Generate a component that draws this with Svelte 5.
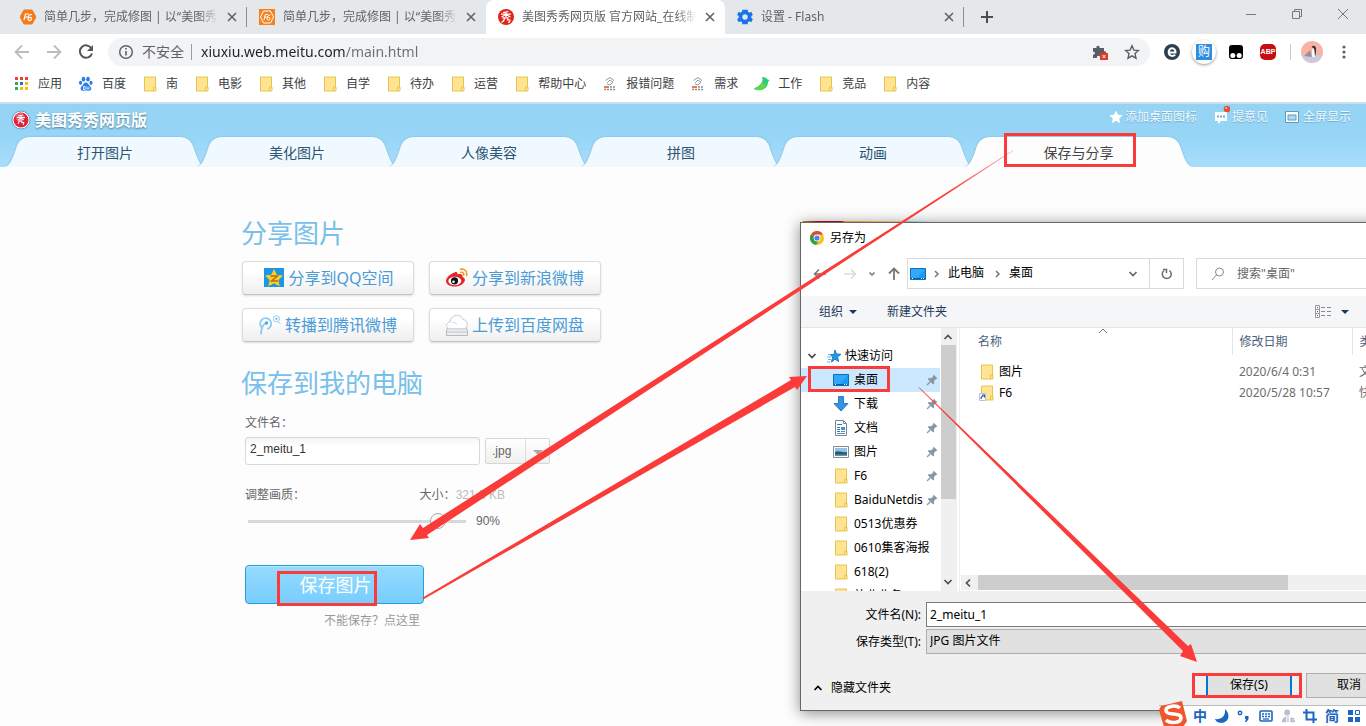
<script lang="ts">
  const browserTabs = [
    { title: '简单几步，完成修图 | 以“美图秀秀”为例', icon: 'f6', active: false },
    { title: '简单几步，完成修图 | 以“美图秀秀”为例', icon: 'f6square', active: false },
    { title: '美图秀秀网页版 官方网站_在线制作', icon: 'meitu', active: true },
    { title: '设置 - Flash', icon: 'gear', active: false },
  ];

  const bookmarks = [
    { label: '应用', icon: 'apps' },
    { label: '百度', icon: 'paw' },
    { label: '南', icon: 'folder' },
    { label: '电影', icon: 'folder' },
    { label: '其他', icon: 'folder' },
    { label: '自学', icon: 'folder' },
    { label: '待办', icon: 'folder' },
    { label: '运营', icon: 'folder' },
    { label: '帮助中心', icon: 'folder' },
    { label: '报错问题', icon: 'seal' },
    { label: '需求', icon: 'seal' },
    { label: '工作', icon: 'bird' },
    { label: '竞品', icon: 'folder' },
    { label: '内容', icon: 'folder' },
  ];

  const navTabs = [
    { label: '打开图片', width: 192 },
    { label: '美化图片', width: 192 },
    { label: '人像美容', width: 192 },
    { label: '拼图', width: 192 },
    { label: '动画', width: 192 },
    { label: '保存与分享', width: 219 },
  ];
  let activeTab = $state('保存与分享');

  const shares = [
    { label: '分享到QQ空间', icon: 'qzone' },
    { label: '分享到新浪微博', icon: 'weibo' },
    { label: '转播到腾讯微博', icon: 'tencent' },
    { label: '上传到百度网盘', icon: 'cloud' },
  ];

  const places = [
    { label: '桌面', icon: 'desktop', pinned: true },
    { label: '下载', icon: 'download', pinned: true },
    { label: '文档', icon: 'document', pinned: true },
    { label: '图片', icon: 'picture', pinned: true },
    { label: 'F6', icon: 'folder', pinned: true },
    { label: 'BaiduNetdis', icon: 'folder', pinned: true },
    { label: '0513优惠券', icon: 'folder', pinned: false },
    { label: '0610集客海报', icon: 'folder', pinned: false },
    { label: '618(2)', icon: 'folder', pinned: false },
    { label: '补业业务', icon: 'folder', pinned: false },
  ];

  const files = [
    { name: '图片', date: '2020/6/4 0:31', type: '文件夹', icon: 'folder' },
    { name: 'F6', date: '2020/5/28 10:57', type: '快捷方式', icon: 'shortcut' },
  ];

  let url = $state('xiuxiu.web.meitu.com/main.html');
  let fileName = $state('2_meitu_1');
  let quality = $state(90);

  // outline of a header tab, flaring out at the foot on both sides
  function tabShape(w: number) {
    return `M0 30 C6 28 8 20 11 12 C13 4 18 0 25 0 H${w - 25} C${w - 18} 0 ${w - 13} 4 ${w - 11} 12 C${w - 8} 20 ${w - 6} 28 ${w} 30 Z`;
  }
</script>

{#snippet icon(name: string)}
  {#if name === 'f6'}
    <svg width="16" height="16" viewBox="0 0 16 16"><path d="M4 1h8l4 7-4 7H4L0 8z" fill="#f47a1a" stroke="#f47a1a" stroke-linejoin="round" /><path d="M4 11l1.500-6H9M5 8h2.500M12 5.500c-3 0-4 2-4 4 0 3 3.500 2.500 3.500 0 0-1.500-2-1.700-3-.4" fill="none" stroke="#fff" stroke-width="1.200" /></svg>
  {:else if name === 'f6square'}
    <svg width="16" height="16" viewBox="0 0 16 16"><path d="M0 0h16v16H0z" fill="#f58220" /><path d="M4.500 2h7l3 6-3 6h-7l-3-6z" fill="none" stroke="#fff" /><path d="M5 11l1.300-5.500H9M5.700 8h2M11.500 6c-2.500 0-3.500 1.500-3.500 3.500 0 2.500 3 2 3 0 0-1.200-1.700-1.500-2.600-.4" fill="none" stroke="#fff" /></svg>
  {:else if name === 'meitu'}
    <svg width="16" height="16" viewBox="0 0 16 16"><circle cx="8" cy="8" r="8" fill="#e32418" /><path d="M5 3.500l5.500-1M3 5.200h10M8 3v5M8 5.500L3.500 8M8 5.500L12.500 8M4.500 8.800H10L9.500 11H12c0 2-.5 2.500-2 2.500M6.500 9c0 2.500-1 3.500-3 4.500" fill="none" stroke="#fff" stroke-width="1.200" /></svg>
  {:else if name === 'gear'}
    <svg width="16" height="16" viewBox="0 0 24 24"><path fill="#1a73e8" fill-rule="evenodd" d="M21.400 13.300c.1-.4.1-.8.100-1.300s0-.9-.1-1.300l2.400-1.900-2.400-4.500-3 1.200c-.6-.5-1.300-.9-2-1.200L16 1H8l-.5 3.300c-.7.3-1.400.7-2 1.200l-3-1.200L.2 8.800l2.400 1.900c-.1.400-.1.900-.1 1.300s0 .9.100 1.300L.2 15.200l2.300 4.500 3-1.200c.6.500 1.300.9 2 1.200L8 23h8l.4-3.300c.7-.3 1.400-.7 2-1.200l3 1.200 2.400-4.500zM12 16a4 4 0 1 1 0-8 4 4 0 0 1 0 8z" /></svg>
  {:else if name === 'apps'}
    <svg width="16" height="16" viewBox="0 0 16 16"><path d="M1 1h3v3H1zM6 1h3v3H6zM11 1h3v3h-3z" fill="#ea4335" /><path d="M1 6h3v3H1zM1 11h3v3H1z" fill="#34a853" /><path d="M6 6h3v3H6z" fill="#1a73e8" /><path d="M11 6h3v3h-3zM6 11h3v3H6zM11 11h3v3h-3z" fill="#fbbc05" /></svg>
  {:else if name === 'paw'}
    <svg width="16" height="16" viewBox="0 0 16 16" fill="#2b7de9"><ellipse cx="5.500" cy="3.200" rx="1.800" ry="2.400" /><ellipse cx="10" cy="3.200" rx="1.800" ry="2.400" /><ellipse cx="2.500" cy="6.800" rx="1.600" ry="2.100" /><ellipse cx="13" cy="6.800" rx="1.600" ry="2.100" /><path d="M7.800 6.500c2.200 0 2.500 2 4.200 3.500 2.500 2.500 1 5-1.500 4.700-1.800-.2-3.500-.2-5 0C2.500 15 1.500 12 4 10c1.500-1.300 1.800-3.500 3.800-3.500z" /><path d="M5.500 10.500h1.700v3H5.500zM9 10.500v2.500h2v-2.500" fill="none" stroke="#fff" stroke-width=".8" /></svg>
  {:else if name === 'folder' || name === 'shortcut'}
    <svg width="16" height="16" viewBox="0 0 16 16"><path d="M2.500 1h11v10h.5v4H2.500z" fill="#ffe491" stroke="#e9c34f" /><path d="M11.500 15v-4h2.500" fill="none" stroke="#e9c34f" />
      {#if name === 'shortcut'}<path d="M.5 8.500h6v7h-6z" fill="#fff" stroke="#b8c4d2" /><path d="M2 14c0-2 1-3 2.500-3M3 10h2.500v2.500" fill="none" stroke="#245aa8" stroke-width="1.200" />{/if}
    </svg>
  {:else if name === 'seal'}
    <svg width="16" height="16" viewBox="0 0 16 16"><path d="M3.500 4.500L8 1.500l4 3M5 7l3-3 3 2-3 3-3-1" fill="none" stroke="#9a9a9a" /><path d="M2 11h5" stroke="#f47a3a" stroke-width="2" /><path d="M8 11h6M2 13.500h12" stroke="#8d8d8d" stroke-width="1.500" stroke-dasharray="2 1" /></svg>
  {:else if name === 'bird'}
    <svg width="16" height="16" viewBox="0 0 16 16"><path d="M8 1c3 0 5 1 5.500 2.500l2 .5-1.500 2c0 5-4 8-8 8-3 0-5-.5-6-1.500C6 10 10 6 8 1z" fill="#2fcb78" /><path d="M0 13c4-1.500 6-4 8-6.500 2.500 1 4 3 3.500 5C8.500 15 3 15 0 13z" fill="#5fd64a" /></svg>
  {:else if name === 'qzone'}
    <svg width="22" height="20" viewBox="0 0 22 20"><path d="M1 0h20v19H1z" fill="#1c97e8" /><path d="M11 1l2.800 5.800 6.200.8-4.600 4.300 1.200 6.300L11 15.200l-5.600 3 1.200-6.300L2 7.600l6.200-.8z" fill="#fcd21c" /><path d="M7.500 8h7l-6 5h6.500" fill="none" stroke="#c06a10" stroke-width="1.500" /></svg>
  {:else if name === 'weibo'}
    <svg width="22" height="20" viewBox="0 0 22 20"><path d="M8.500 4.500c2-1 3.500 0 3 2 3.500-1 5.500 0 5 2.500 2 .7 3 2.500 2 4.500-1.500 3-5.500 5-10 5C3.500 18.500 0 16 0 13c0-3.500 5-7.500 8.500-8.500z" fill="#e6232a" /><ellipse cx="8.800" cy="13" rx="6.500" ry="4.200" fill="#fff" /><circle cx="8.500" cy="12.800" r="3.600" fill="#111" /><circle cx="7.500" cy="13.800" r="1.300" fill="#fff" /><path d="M14.500 1.300c4-1 7 2.200 6 6.200M14.800 4.300c2-.3 3.300 1 2.800 2.800" fill="none" stroke="#f59a23" stroke-width="1.600" stroke-linecap="round" /></svg>
  {:else if name === 'tencent'}
    <svg width="22" height="20" viewBox="0 0 22 20" fill="none" stroke="#8cccf2"><path d="M2 19.500C2 13 4 9 7.500 8M4 13.500a5.500 5.500 0 1 1 4 .5" stroke-width="1.800" /><circle cx="7.500" cy="8" r="1.700" fill="#43a9e6" stroke="none" /><circle cx="17.500" cy="3.800" r="3" /><circle cx="17.500" cy="3.800" r="1" fill="#43a9e6" stroke="none" /><path d="M18 6c1 1 2 2 3.500 2.500" /></svg>
  {:else if name === 'cloud'}
    <svg width="22" height="21" viewBox="0 0 22 21"><path d="M1.500 13h19l1 3v4.500H.5V16z" fill="#eceeef" stroke="#b8b8b8" /><path d="M1 17h20" stroke="#c2c2c2" /><path d="M3.500 14c-4-1-4-6 .5-7C5-1.500 15-1.500 17 4.500 22 5 22.500 12 19 14z" fill="#fff" stroke="#c4c9ce" /><path d="M6 7.500c2-.5 4 .5 5 2.500M2.500 13.500h17" fill="none" stroke="#ccdce8" /></svg>
  {:else if name === 'desktop'}
    <svg width="16" height="16" viewBox="0 0 16 16"><path d="M.5 2.500h15v11H.5z" fill="#1e9bf5" stroke="#0b70b8" /><path d="M1 3h14l-8 9H1z" fill="#31a8fa" /><path d="M1 12.500h14" stroke="#0b5c9c" /><path d="M2 12.500h1M11 12.500h1M13 12.500h1" stroke="#fff" /></svg>
  {:else if name === 'download'}
    <svg width="16" height="16" viewBox="0 0 16 16"><path d="M5.500.5h5v7h4.500L8 15 1 7.500h4.500z" fill="#3691e0" stroke="#2c7cc8" /></svg>
  {:else if name === 'document'}
    <svg width="16" height="16" viewBox="0 0 16 16"><path d="M2.500.5h8l3 3v12h-11z" fill="#fff" stroke="#7b868e" /><path d="M10.500.5v3h3" fill="none" stroke="#7b868e" /><path d="M4 4.500h5M4 7.500h3M4 9.500h3M4 11.500h3" stroke="#2d7dbd" /><path d="M8 7h4v3H8zM8 11h4v1H8zM4 13h8v1H4z" fill="#4d91c5" /></svg>
  {:else if name === 'picture'}
    <svg width="16" height="16" viewBox="0 0 16 16"><path d="M.5 2.500h15v11H.5z" fill="#fff" stroke="#858f96" /><path d="M2 4h12v8H2z" fill="#8fc4ea" /><path d="M2 8c4-2 7 1 12 0v4H2z" fill="#2e5866" /><path d="M2 10.500h12V12H2z" fill="#5a96b8" /></svg>
  {/if}
{/snippet}

{#snippet chevron(direction: string)}
  <svg class="chevron {direction}" width="10" height="10" viewBox="0 0 10 10"><path d="M1.500 3L5 6.500 8.500 3" fill="none" stroke="currentColor" stroke-width="1.700" /></svg>
{/snippet}

<div class="screen">
  <div class="tab-strip">
    {#each browserTabs as tab}
      <div class="browser-tab" class:active={tab.active}>
        {@render icon(tab.icon)}
        <span class="tab-title">{tab.title}</span>
        <button class="plain" aria-label="关闭">
          <svg width="10" height="10" viewBox="0 0 10 10"><path d="M1 1l8 8M9 1L1 9" stroke="#5f6368" stroke-width="1.600" /></svg>
        </button>
      </div>
    {/each}
    <button class="plain new-tab" aria-label="新标签页">
      <svg width="12" height="12" viewBox="0 0 12 12"><path d="M6 0v12M0 6h12" stroke="#494c50" stroke-width="2" /></svg>
    </button>
    <div class="window-controls">
      <button class="plain" aria-label="最小化"><svg width="10" height="10" viewBox="0 0 10 10"><path d="M0 5.500h10" stroke="#777" /></svg></button>
      <button class="plain" aria-label="还原"><svg width="10" height="10" viewBox="0 0 10 10"><path d="M.5 2.500h7v7h-7zM2.500 2.500v-2h7v7h-2" fill="none" stroke="#777" /></svg></button>
      <button class="plain" aria-label="关闭窗口"><svg width="10" height="10" viewBox="0 0 10 10"><path d="M0 0l10 10M10 0L0 10" stroke="#777" /></svg></button>
    </div>
  </div>

  <div class="toolbar">
    <div class="tools">
      <button class="plain" aria-label="后退"><svg width="16" height="16" viewBox="0 0 16 16"><path d="M15 8H2M8 1.500L1.500 8 8 14.500" fill="none" stroke="#babcbe" stroke-width="1.800" /></svg></button>
      <button class="plain" aria-label="前进"><svg width="16" height="16" viewBox="0 0 16 16"><path d="M1 8h13M8 1.500L14.500 8 8 14.500" fill="none" stroke="#babcbe" stroke-width="1.800" /></svg></button>
      <button class="plain" aria-label="重新加载"><svg width="16" height="16" viewBox="0 0 16 16"><path d="M13.500 4.500A6.200 6.200 0 1 0 14 9.500" fill="none" stroke="#53565a" stroke-width="2" /><path d="M15 1v6H9z" fill="#53565a" /></svg></button>
    </div>
    <div class="omnibox">
      <svg width="16" height="16" viewBox="0 0 16 16"><circle cx="8" cy="8" r="6.300" fill="none" stroke="#5f6368" stroke-width="1.500" /><path d="M8 7v4.500M8 4v1.600" stroke="#5f6368" stroke-width="1.600" /></svg>
      <span class="insecure">不安全</span>
      <input class="url" aria-label="地址" bind:value={url} />
      <svg width="16" height="16" viewBox="0 0 16 16"><path d="M1 4h3.500c-1-3 4-3 3 0H12v3.500c3-1 3 4 0 3V14H8c1-3-4-3-3 0H1v-3.500c2.500 1 2.500-3.500 0-2.500z" fill="#5a5d61" /><path d="M8 9h8v7H8z" fill="#dd3b2f" /><path d="M10.500 11l3 3M13.500 11l-3 3" stroke="#fff" /></svg>
      <svg width="16" height="16" viewBox="0 0 16 16"><path d="M8 1.800l1.900 4.300 4.600.4-3.500 3.100 1 4.600L8 11.800l-4 2.400 1-4.600-3.500-3.100 4.600-.4z" fill="none" stroke="#5a5d61" stroke-width="1.400" /></svg>
    </div>
    <div class="extensions">
      <svg width="16" height="16" viewBox="0 0 16 16"><circle cx="8" cy="8" r="8" fill="#2f3e50" /><path d="M4.500 8.500h7c.3-5.500-6.800-5.500-6.800-.5 0 4 4 4.800 6.500 2.800" fill="none" stroke="#fff" stroke-width="2" /></svg>
      <span class="shop">购</span>
      <svg width="16" height="16" viewBox="0 0 16 16"><rect x="1" y="1" width="14" height="14" rx="3" fill="#000" /><circle cx="4.800" cy="11.500" r="2.500" fill="#fff" /><circle cx="11.200" cy="11.500" r="2.500" fill="#fff" /></svg>
      <span class="abp">ABP</span>
    </div>
    <svg class="avatar" width="22" height="22" viewBox="0 0 22 22"><circle cx="11" cy="11" r="11" fill="#f9b3a4" /><path d="M.5 14h21A11 11 0 0 1 .5 14z" fill="#c7ccdc" /><path d="M3 15l6-6 2 7z" fill="#9a9198" /><path d="M11.500 16c-1-4 0-10 1.500-10s2.500 7 1 10z" fill="#fff" /><path d="M10.500 6c2-2.500 4.500-1 4.500 2 0 2 0 5-1 8-.5-4 0-7-1.500-9z" fill="#2b2b33" /></svg>
    <button class="plain" aria-label="菜单"><svg width="16" height="16" viewBox="0 0 16 16" fill="#5f6368"><circle cx="8" cy="3" r="1.600" /><circle cx="8" cy="8" r="1.600" /><circle cx="8" cy="13" r="1.600" /></svg></button>
  </div>

  <div class="bookmarks">
    {#each bookmarks as item}
      <a href="#{item.label}">{@render icon(item.icon)}{item.label}</a>
    {/each}
  </div>

  <header class="app-header">
    <div class="brand-row">
      <svg width="20" height="20" viewBox="0 0 20 20"><circle cx="10" cy="10" r="9" fill="#fff" stroke="#6b9cbb" /><circle cx="10" cy="10" r="7.500" fill="#dc2440" /><circle cx="9" cy="7" r="4.500" fill="#f07d8d" opacity=".6" /><path d="M7 6l5-1M6 7.500h8M10 6v4M7 10l3-2 3 2M7 11h4l-.5 1.500H13l-1 2.500M8.500 11L7 14" fill="none" stroke="#fff" /></svg>
      <span class="brand">美图秀秀网页版</span>
      <div class="header-links">
        <a href="#desktop"><svg width="14" height="14" viewBox="0 0 14 14"><path d="M7 .5l2 4.300 4.700.5-3.500 3.100 1 4.800L7 10.800l-4.200 2.400 1-4.800L.3 5.300 5 4.800z" fill="#fff" /></svg>添加桌面图标</a>
        <a href="#feedback"><svg class="bubble" width="16" height="20" viewBox="0 0 16 20"><path d="M1 7h12v9H7l-3 3v-3H1z" fill="#fff" /><path d="M3 11.500h2M6 11.500h2M9 11.500h2" stroke="#5eadd8" stroke-width="2" /><circle cx="13" cy="4" r="3.300" fill="#e2502f" /><circle cx="12.200" cy="3" r="1.200" fill="#f5a58e" /></svg>提意见</a>
        <a class="full" href="#fullscreen"><svg width="14" height="14" viewBox="0 0 14 14"><path d="M.5 1.500h13v11H.5z" fill="#fff" stroke="#5d9bc0" /><path d="M3 5h8v5H3z" fill="#a9dbf5" stroke="#5d9bc0" /></svg>全屏显示</a>
      </div>
    </div>
    <nav class="app-nav">
      {#each navTabs as tab}
        <button
          class="nav-tab"
          class:active={activeTab === tab.label}
          style="width: {tab.width}px"
          onclick={() => (activeTab = tab.label)}
        >
          <svg class="tab-bg" width={tab.width + 8} height="30"><path d={tabShape(tab.width + 8)} /></svg>
          <span>{tab.label}</span>
        </button>
      {/each}
    </nav>
  </header>

  <main class="panel">
    <h2>分享图片</h2>
    <div class="share-grid">
      {#each shares as share}
        <button class="share">{@render icon(share.icon)}{share.label}</button>
      {/each}
    </div>

    <h2>保存到我的电脑</h2>
    <div class="save-form">
      <label for="name">文件名：</label>
      <div class="name-row">
        <input id="name" bind:value={fileName} />
        <div class="format">
          <select aria-label="格式"><option>.jpg</option><option>.png</option></select>
        </div>
      </div>
      <div class="quality-labels">
        <label for="quality">调整画质：</label>
        <span>大小：<span class="size">321.5 KB</span></span>
      </div>
      <div class="quality-row">
        <input id="quality" type="range" min="0" max="100" bind:value={quality} />
        <span>{quality}%</span>
      </div>
      <button class="save">保存图片</button>
      <a class="help" href="#help">不能保存？点这里</a>
    </div>
  </main>

  <div class="dialog" role="dialog" aria-label="另存为">
    <div class="dialog-title">
      <svg width="14" height="14" viewBox="0 0 14 14"><circle cx="7" cy="7" r="7" fill="#fbc116" /><path d="M7 7L.9 3.500A7 7 0 0 0 6 13.900L9.500 8z" fill="#2ca04b" /><path d="M.9 3.500a7 7 0 0 1 12.200 0H7v4z" fill="#dd4b3e" /><circle cx="7" cy="7" r="3.400" fill="#fff" /><circle cx="7" cy="7" r="2.600" fill="#4285f4" /></svg>
      另存为
    </div>
    <div class="dialog-nav">
      <div class="history">
        <button class="plain" aria-label="返回"><svg width="14" height="14" viewBox="0 0 14 14"><path d="M13 7H2M6 2.500L1.500 7 6 11.500" fill="none" stroke="#777" stroke-width="1.500" /></svg></button>
        <button class="plain" aria-label="前进"><svg width="14" height="14" viewBox="0 0 14 14"><path d="M1 7h11M8 2.500L12.500 7 8 11.500" fill="none" stroke="#dadada" stroke-width="1.500" /></svg></button>
        <button class="plain" aria-label="最近位置"><svg width="10" height="10" viewBox="0 0 10 10"><path d="M2.500 3.500L5 6l2.500-2.500" fill="none" stroke="#777" stroke-width="1.500" /></svg></button>
        <button class="plain" aria-label="向上"><svg width="14" height="14" viewBox="0 0 14 14"><path d="M7 13V2M2 6.500l5-5 5 5" fill="none" stroke="#777" stroke-width="1.800" /></svg></button>
      </div>
      <div class="address">
        {@render icon('desktop')}
        <svg width="10" height="10" viewBox="0 0 10 10"><path d="M4 2l3 3-3 3" fill="none" stroke="#777" stroke-width="1.500" /></svg>
        <span>此电脑</span>
        <svg width="10" height="10" viewBox="0 0 10 10"><path d="M4 2l3 3-3 3" fill="none" stroke="#777" stroke-width="1.500" /></svg>
        <span>桌面</span>
        <button class="plain expand" aria-label="展开">{@render chevron('down')}</button>
        <button class="plain refresh" aria-label="刷新"><svg width="14" height="14" viewBox="0 0 14 14"><path d="M4 3.500a4.500 4.500 0 1 0 5.500 0" fill="none" stroke="#6d6d6d" stroke-width="1.500" /><path d="M3 2.500h3.500V6" fill="none" stroke="#6d6d6d" stroke-width="1.500" /></svg></button>
      </div>
      <div class="search">
        <svg width="14" height="14" viewBox="0 0 14 14"><circle cx="8.500" cy="5" r="4" fill="none" stroke="#8a8a8a" /><path d="M5.500 8l-4.500 5" stroke="#8a8a8a" /></svg>
        <input aria-label="搜索" placeholder={'搜索"桌面"'} />
      </div>
    </div>
    <div class="dialog-toolbar">
      <button class="plain">组织<svg width="8" height="4" viewBox="0 0 8 4"><path d="M0 0h8L4 4z" fill="#1e395b" /></svg></button>
      <button class="plain">新建文件夹</button>
      <button class="plain view" aria-label="更改视图">
        <svg width="17" height="14" viewBox="0 0 17 14"><path d="M.5.5h4v12h-4zM.5 4.500h4M.5 8.500h4" fill="none" stroke="#9a9a9a" /><path d="M6 2.500h4M12 2.500h4M6 6.500h4M12 6.500h4M6 10.500h4M12 10.500h4" stroke="#8a8a8a" /><path d="M2 2h1v1H2zM2 6h1v1H2z" fill="#3978c0" /><path d="M2 10h1v1H2z" fill="#c33" /></svg>
        <svg width="8" height="4" viewBox="0 0 8 4"><path d="M0 0h8L4 4z" fill="#1e395b" /></svg>
      </button>
    </div>

    <div class="browser">
      <div class="places">
        <div class="quick">
          {@render chevron('down')}
          <svg width="16" height="16" viewBox="0 0 16 16"><path d="M9 2l1.500 4 4.500.3-3.500 2.700 1.200 4.500L9 11.200 5.500 14l1.300-5L4 6.500h4z" fill="#2a95dc" stroke="#1b7fc4" /><path d="M2 6.500h3M1 9h4M2 11.500h3M1 14h3" stroke="#61b5ea" /></svg>
          快速访问
        </div>
        {#each places as place, i}
          <button class="place" class:selected={i === 0}>
            {@render icon(place.icon)}
            <span>{place.label}</span>
            {#if place.pinned}
              <svg width="12" height="12" viewBox="0 0 12 12"><path d="M7.500.5l4 4-1.500.5-2 2 .2 2.800-1.200.5L2 5.500 2.500 4l2.700.2 2-2z" fill="#8797a4" /><path d="M4.500 7.500L1 11" stroke="#8797a4" stroke-width="1.300" /></svg>
            {/if}
          </button>
        {/each}
      </div>
      <div class="scrollbar">
        {@render chevron('up')}
        <div class="thumb"></div>
        {@render chevron('down')}
      </div>
      <div class="files">
        <svg class="sort-mark" width="10" height="6" viewBox="0 0 10 6"><path d="M1 5l4-4 4 4" fill="none" stroke="#777" /></svg>
        <table>
          <thead>
            <tr><th class="col-name">名称</th><th class="col-date">修改日期</th><th>类型</th></tr>
          </thead>
          <tbody>
            {#each files as file}
              <tr>
                <td class="file-name"><div>{@render icon(file.icon)}{file.name}</div></td>
                <td>{file.date}</td>
                <td>{file.type}</td>
              </tr>
            {/each}
          </tbody>
        </table>
        <div class="h-scroll">
          {@render chevron('left')}
          <div class="h-thumb"></div>
        </div>
      </div>
    </div>

    <div class="dialog-footer">
      <div class="field">
        <label for="save-name">文件名(N):</label>
        <input id="save-name" bind:value={fileName} />
      </div>
      <div class="field">
        <label for="save-type">保存类型(T):</label>
        <select id="save-type"><option>JPG 图片文件</option></select>
      </div>
      <div class="actions">
        <button class="plain hide">{@render chevron('up')}隐藏文件夹</button>
        <button class="action primary">保存(S)</button>
        <button class="action">取消</button>
      </div>
    </div>
  </div>

  <div class="ime">
    <svg class="sogou" width="28" height="26" viewBox="0 0 28 26"><path d="M2 5L23 0l5 20-4 6H5L0 9z" fill="#f0562b" /><path d="M21 7C16 3 6 6 7 10c1 5 15 1 15 7 0 5-11 6-15 2" fill="none" stroke="#fff" stroke-width="3.500" /></svg>
    <span>中</span>
    <svg width="14" height="14" viewBox="0 0 14 14"><path d="M10 0c5 4 5 13-3 14-3 0-6-1-7-4 6 1 11-3 10-10z" fill="#1b66c0" /></svg>
    <svg width="14" height="14" viewBox="0 0 14 14"><circle cx="3" cy="4" r="1.700" fill="none" stroke="#1b66c0" stroke-width="1.500" /><path d="M8 7h3.500v3l-2 3H8l1-3H8z" fill="#1b66c0" /></svg>
    <svg width="14" height="14" viewBox="1 0 14 14"><rect x="2" y="2" width="12" height="10" rx="1" fill="none" stroke="#1b66c0" stroke-width="1.600" /><path d="M4 5h9M4 7.500h9" stroke="#1b66c0" stroke-width="1.300" stroke-dasharray="2 1" /><path d="M5 10h6" stroke="#1b66c0" stroke-width="1.300" /></svg>
    <svg width="14" height="14" viewBox="0 0 16 16"><circle cx="7" cy="4" r="3.300" fill="#b8c0d0" /><path d="M1 15c0-8 11-8 11-4v4z" fill="#b8c0d0" /><path d="M6 9h10v7H6z" fill="#fff" /><path d="M8 10v5M15 10.500h-3.500v4H15v-2h-3" fill="none" stroke="#a4adbf" stroke-width="1.200" /></svg>
    <svg width="14" height="14" viewBox="0 0 14 14"><path d="M3.500 0v10.500H14M0 3.500h10.500V14" fill="none" stroke="#1b66c0" stroke-width="2" /></svg>
    <span>简</span>
    <svg width="14" height="14" viewBox="0 0 14 14"><path d="M1 1h5v5H1zM1 8h5v5H1zM8 8h5v5H8z" fill="#1b66c0" /><path d="M8.500 1.500h4v4h-4z" fill="none" stroke="#1b66c0" /></svg>
  </div>

  <svg class="marks" width="1366" height="726" viewBox="0 0 1366 726">
    <defs>
      <linearGradient id="fade" gradientUnits="userSpaceOnUse" x1="1013" y1="151" x2="950" y2="192">
        <stop offset="0" stop-color="#fb3b39" stop-opacity=".3" />
        <stop offset="1" stop-color="#fb3b39" />
      </linearGradient>
    </defs>
    <polygon points="410,540 420,524 423,528 1013,150 1013,151 427,535 429,538" />
    <polygon points="807,376 789,377 791,380 422,598 424,599 795,387 797,390" />
    <polygon points="1197,662 1180,656 1183,651 918,387 920,388 1188,646 1191,644" />
    <rect x="1005.500" y="134.500" width="129" height="31" />
    <rect x="278.500" y="572.500" width="97" height="32" />
    <rect x="809.500" y="367.500" width="79" height="23" />
    <rect x="1193.500" y="674.500" width="107" height="22" />
  </svg>
</div>

<style>
  :global(body) {
    margin: 0;
    background: #fdfdfd;
  }

  .screen {
    position: relative;
    min-height: 100vh;
    overflow: hidden;
    background: #fdfdfd;
    color: #000;
    font-family: 'Noto Sans', 'Noto Sans CJK SC', sans-serif;
    font-size: 12px;
    line-height: 16px;
  }

  .screen * {
    box-sizing: border-box;
  }

  button,
  input,
  select {
    font: inherit;
    color: inherit;
  }

  svg {
    flex: none;
    display: block;
  }

  a {
    color: inherit;
    text-decoration: none;
  }

  .plain {
    display: flex;
    align-items: center;
    padding: 0;
    border: 0;
    background: none;
  }

  .chevron.up {
    transform: rotate(180deg);
  }

  .chevron.left {
    transform: rotate(90deg);
  }

  /* browser window */
  .tab-strip {
    display: flex;
    align-items: center;
    height: 34px;
    padding-left: 8px;
    background: #e5e8eb;
  }

  .browser-tab {
    display: flex;
    align-items: center;
    gap: 8px;
    width: 239px;
    height: 34px;
    padding: 0 10px 0 12px;
    color: #5f6368;
    border-radius: 8px 8px 0 0;
  }

  .browser-tab:first-child,
  .browser-tab:nth-child(4) {
    background: linear-gradient(#8b8e92, #8b8e92) right center / 1px 20px no-repeat;
  }

  .browser-tab.active {
    background: #fff;
  }

  .tab-title {
    flex: 1;
    overflow: hidden;
    white-space: nowrap;
    mask-image: linear-gradient(90deg, #000 88%, transparent);
  }

  .new-tab {
    margin-left: 17px;
  }

  .window-controls {
    display: flex;
    gap: 36px;
    margin: 0 18px 6px auto;
  }

  .toolbar {
    display: flex;
    align-items: center;
    height: 36px;
    padding: 0 14px;
    background: #fff;
  }

  .tools {
    display: flex;
    gap: 16px;
    margin-right: 14px;
  }

  .omnibox {
    flex: 1;
    display: flex;
    align-items: center;
    height: 28px;
    padding: 0 10px;
    border-radius: 14px;
    background: #f1f3f4;
    font-size: 14px;
    gap: 16px;
  }

  .insecure {
    margin-left: -8px;
    padding-right: 7px;
    border-right: 1px solid #9a9da1;
    color: #5f6368;
  }

  .url {
    flex: 1;
    height: 24px;
    margin-left: -7px;
    padding: 0 0 2px;
    border: 0;
    color: transparent;
    background: linear-gradient(90deg, #202124 144px, #6b6f74 144px);
    background-clip: text;
  }

  .extensions {
    display: flex;
    align-items: center;
    gap: 16px;
    height: 16px;
    padding: 0 14px;
    border-right: 1px solid #c8cacd;
  }

  .shop {
    width: 24px;
    height: 24px;
    margin: 0 -4px;
    border-radius: 50%;
    background: linear-gradient(#2e8ddf, #2e8ddf) center / 16px 16px no-repeat #fff;
    box-shadow: 0 1px 3px #999;
    color: #fff;
    text-align: center;
    line-height: 24px;
  }

  .abp {
    width: 16px;
    height: 16px;
    border-radius: 5px;
    background: #c70d12;
    color: #fff;
    font-family: 'Liberation Sans', sans-serif;
    font-size: 7px;
    font-weight: bold;
    text-align: center;
  }

  .avatar {
    margin: 0 13px 0 10px;
  }

  .bookmarks {
    display: flex;
    align-items: center;
    gap: 16px;
    height: 33px;
    padding: 0 14px 4px;
    border-bottom: 1px solid #d9dadd;
    background: #fff;
    color: #3c4043;
  }

  .bookmarks a {
    display: flex;
    align-items: center;
    gap: 8px;
  }

  /* meitu header */
  .app-header {
    overflow: hidden;
    border-top: 1px solid #c3e2f2;
    background: linear-gradient(#94d3f4, #96d5f6 50%, #a9defa);
  }

  .brand-row {
    display: flex;
    align-items: center;
    height: 33px;
    padding: 0 15px 2px 11px;
  }

  .brand {
    margin-left: 4px;
    color: #fff;
    font-size: 16px;
    font-weight: bold;
    text-shadow: 0 1px 2px #4d7f9c;
  }

  .header-links {
    display: flex;
    gap: 17px;
    margin: 0 0 6px auto;
    color: #eef9ff;
    text-shadow: 0 1px 1px #6fa9cb;
  }

  .header-links a {
    display: flex;
    align-items: center;
    height: 16px;
    gap: 2px;
  }

  .header-links .full {
    gap: 4px;
  }

  .bubble {
    margin-bottom: 4px;
  }

  .app-nav {
    display: flex;
    height: 30px;
    padding-left: 9px;
  }

  .nav-tab {
    position: relative;
    padding: 2px 0 0;
    border: 0;
    background: none;
    color: #2b5572;
    font-size: 14px;
    line-height: 20px;
  }

  .nav-tab span {
    position: relative;
  }

  .tab-bg {
    position: absolute;
    top: 0;
    left: -4px;
    fill: #f0f9ff;
    filter: drop-shadow(0 0 1px #7db4d4);
  }

  .nav-tab.active {
    color: #444;
  }

  .nav-tab.active .tab-bg {
    fill: #fdfdfd;
  }

  /* share and save panel */
  .panel {
    padding: 49px 0 90px 241px;
  }

  h2 {
    margin: 0;
    color: #78c0ea;
    font-size: 26px;
    font-weight: 400;
    line-height: 34px;
  }

  .share-grid {
    display: grid;
    grid-template-columns: 172px 172px;
    gap: 13px 15px;
    margin: 11px 0 24px;
    padding-left: 1px;
  }

  .share {
    display: flex;
    align-items: center;
    justify-content: center;
    gap: 4px;
    height: 34px;
    padding: 0;
    border: 1px solid #dcdcdc;
    border-bottom-color: #c4c4c4;
    border-radius: 4px;
    background: linear-gradient(#fff 30%, #efefef);
    box-shadow: 0 1px 2px #ddd;
    color: #4b9bd6;
    font-size: 16px;
    white-space: nowrap;
  }

  .save-form {
    display: flex;
    flex-direction: column;
    align-items: flex-start;
    width: 310px;
    margin-top: 15px;
    padding-left: 4px;
    color: #666;
  }

  .name-row {
    display: flex;
    align-items: center;
    gap: 5px;
    margin-top: 6px;
    font-family: 'Liberation Sans', sans-serif;
  }

  #name {
    width: 235px;
    height: 28px;
    padding: 0 4px 4px;
    border: 1px solid #d8d8d8;
    border-radius: 3px;
    background: linear-gradient(#f4f4f4, #fff 8px);
    color: #333;
  }

  .format {
    position: relative;
    width: 65px;
    height: 26px;
    border: 1px solid #d6d6d6;
    border-radius: 2px;
    background: linear-gradient(90deg, transparent 39px, #ddd 39px, #ddd 40px, transparent 40px), linear-gradient(#fff, #f0f0f0);
  }

  .format select {
    width: 63px;
    height: 24px;
    padding: 0 6px;
    border: 0;
    appearance: none;
    background: none;
  }

  .format::after {
    content: '';
    position: absolute;
    top: 11px;
    right: 6px;
    border: 5px solid transparent;
    border-top-color: #a8a8a8;
    pointer-events: none;
  }

  .quality-labels {
    display: flex;
    justify-content: space-between;
    width: 260px;
    margin-top: 22px;
  }

  .size {
    color: #bbb;
    font-family: 'Liberation Sans', sans-serif;
  }

  .quality-row {
    display: flex;
    align-items: center;
    gap: 10px;
    margin-top: 10px;
    padding-left: 3px;
    font-family: 'Liberation Sans', sans-serif;
  }

  #quality {
    appearance: none;
    width: 218px;
    height: 16px;
    margin: 0;
    background: linear-gradient(#d8d8d8, #d8d8d8) center / 100% 3px no-repeat;
  }

  #quality::-webkit-slider-thumb {
    appearance: none;
    width: 16px;
    height: 16px;
    border: 1px solid #aaa;
    border-radius: 50%;
    background: #f8f8f8;
  }

  .save {
    width: 179px;
    height: 39px;
    margin-top: 36px;
    padding: 0 0 0 2px;
    border: 1px solid #1fa3d4;
    border-radius: 4px;
    background: linear-gradient(#95dbff, #78cdfe);
    box-shadow: inset 0 1px #b5e7ff;
    color: #fff;
    font-size: 18px;
  }

  .help {
    width: 175px;
    margin-top: 9px;
    color: #999;
    text-align: right;
  }

  /* save-as window */
  .dialog {
    position: absolute;
    top: 222px;
    left: 800px;
    width: 610px;
    border: 1px solid #666;
    background: #fff;
    box-shadow: 0 2px 14px #888;
  }

  .dialog::before {
    content: '';
    position: absolute;
    top: -2px;
    left: 2px;
    width: 130px;
    height: 1px;
    background: linear-gradient(90deg, #b07810, #a01010 12%, #a01010 30%, #e0912c 32%, #e5b56a 75%, #69c4c4 80%, transparent);
  }

  .dialog-title {
    display: flex;
    align-items: center;
    gap: 6px;
    height: 29px;
    padding-left: 9px;
  }

  .dialog-nav {
    display: flex;
    margin: 6px 0 7px;
  }

  .history {
    display: flex;
    align-items: center;
    gap: 10px;
    width: 106px;
    padding-left: 12px;
  }

  .history button:first-child {
    margin-right: 6px;
  }

  .address {
    display: flex;
    align-items: center;
    width: 277px;
    height: 31px;
    padding-left: 2px;
    border: 1px solid #d9d9d9;
    color: #000;
  }

  .address span {
    margin: 0 8px 2px 7px;
  }

  .address svg + svg {
    margin-left: 5px;
  }

  .expand {
    margin: 0 11px 0 auto;
    color: #666;
  }

  .refresh {
    height: 29px;
    padding: 0 9px 0 10px;
    border-left: 1px solid #d9d9d9;
  }

  .search {
    display: flex;
    flex: 1;
    align-items: center;
    gap: 12px;
    margin: 0 12px;
    padding-left: 14px;
    border: 1px solid #d9d9d9;
  }

  .search input {
    width: 120px;
    padding: 0;
    border: 0;
    outline: 0;
  }

  .search input::placeholder {
    color: #666;
  }

  .dialog-toolbar {
    display: flex;
    align-items: center;
    gap: 30px;
    height: 32px;
    padding: 0 60px 0 18px;
    border-bottom: 1px solid #e4e5e8;
    background: #f5f6f8;
    color: #1e395b;
  }

  .dialog-toolbar button {
    gap: 6px;
  }

  .dialog-toolbar .view {
    gap: 9px;
    margin-left: auto;
  }

  .browser {
    display: flex;
    height: 263px;
    overflow: hidden;
  }

  .places {
    width: 140px;
    padding-top: 16px;
  }

  .quick {
    display: flex;
    align-items: center;
    height: 24px;
    padding-left: 6px;
  }

  .quick svg + svg {
    margin: 0 3px 0 9px;
  }

  .quick .chevron {
    color: #444;
  }

  .place {
    display: flex;
    align-items: center;
    width: 139px;
    height: 24px;
    padding: 0 2px 0 32px;
    border: 0;
    background: none;
    text-align: left;
  }

  .place.selected {
    background: #cce8ff;
  }

  .place span {
    flex: 1;
    overflow: hidden;
    margin: 0 1px 0 5px;
    white-space: nowrap;
  }

  .scrollbar {
    display: flex;
    flex-direction: column;
    align-items: flex-start;
    justify-content: space-between;
    width: 16px;
    margin-right: 2px;
    padding: 4px 0;
    background: #f0f0f0;
    color: #505050;
  }

  .scrollbar .chevron {
    margin-left: 2px;
  }

  .thumb {
    width: 15px;
    height: 154px;
    margin: 3px 0 auto;
    background: #cdcdcd;
  }

  .files {
    position: relative;
    flex: 1;
    display: flex;
    flex-direction: column;
    overflow: hidden;
    border-left: 1px solid #eee;
  }

  .sort-mark {
    position: absolute;
    top: 0;
    left: 138px;
  }

  table {
    width: 100%;
    table-layout: fixed;
    border-collapse: collapse;
    color: #6d6d6d;
  }

  th {
    height: 27px;
    padding: 0 7px;
    border-left: 1px solid #e5e5e5;
    color: #4c607a;
    font-weight: 400;
    text-align: left;
  }

  .col-name {
    width: 272px;
    padding-left: 18px;
    border-left: 0;
  }

  .col-date {
    width: 120px;
  }

  td {
    height: 21px;
    padding: 0 7px;
    white-space: nowrap;
  }

  tbody::before {
    content: '';
    display: block;
    height: 6px;
  }

  .file-name {
    padding-left: 19px;
    color: #000;
  }

  .file-name div {
    display: flex;
    gap: 4px;
  }

  .h-scroll {
    display: flex;
    align-items: center;
    gap: 5px;
    height: 15px;
    margin: auto 0 1px 1px;
    padding-left: 2px;
    background: #f0f0f0;
    color: #505050;
  }

  .h-thumb {
    width: 310px;
    height: 15px;
    background: #cdcdcd;
  }

  .dialog-footer {
    padding: 11px 17px 12px 0;
    background: #f0f0f0;
  }

  .field {
    display: flex;
    align-items: center;
    gap: 5px;
    margin-bottom: 2px;
  }

  .field label {
    width: 120px;
    text-align: right;
  }

  .field input,
  .field select {
    flex: 1;
    height: 25px;
    padding: 0 3px 1px;
    border: 1px solid #7a7a7a;
    border-radius: 0;
    background: #fff;
  }

  .field select {
    border-color: #adadad;
    appearance: none;
    background: #e1e1e1;
  }

  .actions {
    display: flex;
    align-items: center;
    gap: 14px;
    margin-top: 19px;
  }

  .hide {
    gap: 8px;
    margin: 4px auto 0 12px;
  }

  .action {
    width: 86px;
    height: 25px;
    padding: 0 0 2px;
    border: 1px solid #adadad;
    background: #e1e1e1;
  }

  .action.primary {
    border: 2px solid #0078d7;
  }

  /* input method bar */
  .ime {
    position: absolute;
    right: 0;
    bottom: 0;
    display: flex;
    align-items: center;
    gap: 8px;
    height: 21px;
    padding-right: 5px;
    border-top: 1px solid #bbb;
    background: linear-gradient(90deg, transparent 12px, #fff 12px);
    color: #1b66c0;
    font-size: 14px;
    font-weight: bold;
  }

  .sogou {
    margin-top: -4px;
    margin-right: -2px;
  }

  /* red pointers drawn over both windows */
  .marks {
    position: absolute;
    top: 0;
    left: 0;
    pointer-events: none;
  }

  .marks polygon {
    fill: #fb3b39;
  }

  .marks polygon:first-of-type {
    fill: url(#fade);
  }

  .marks rect {
    fill: none;
    stroke: #fb3b39;
    stroke-width: 3px;
  }
</style>
